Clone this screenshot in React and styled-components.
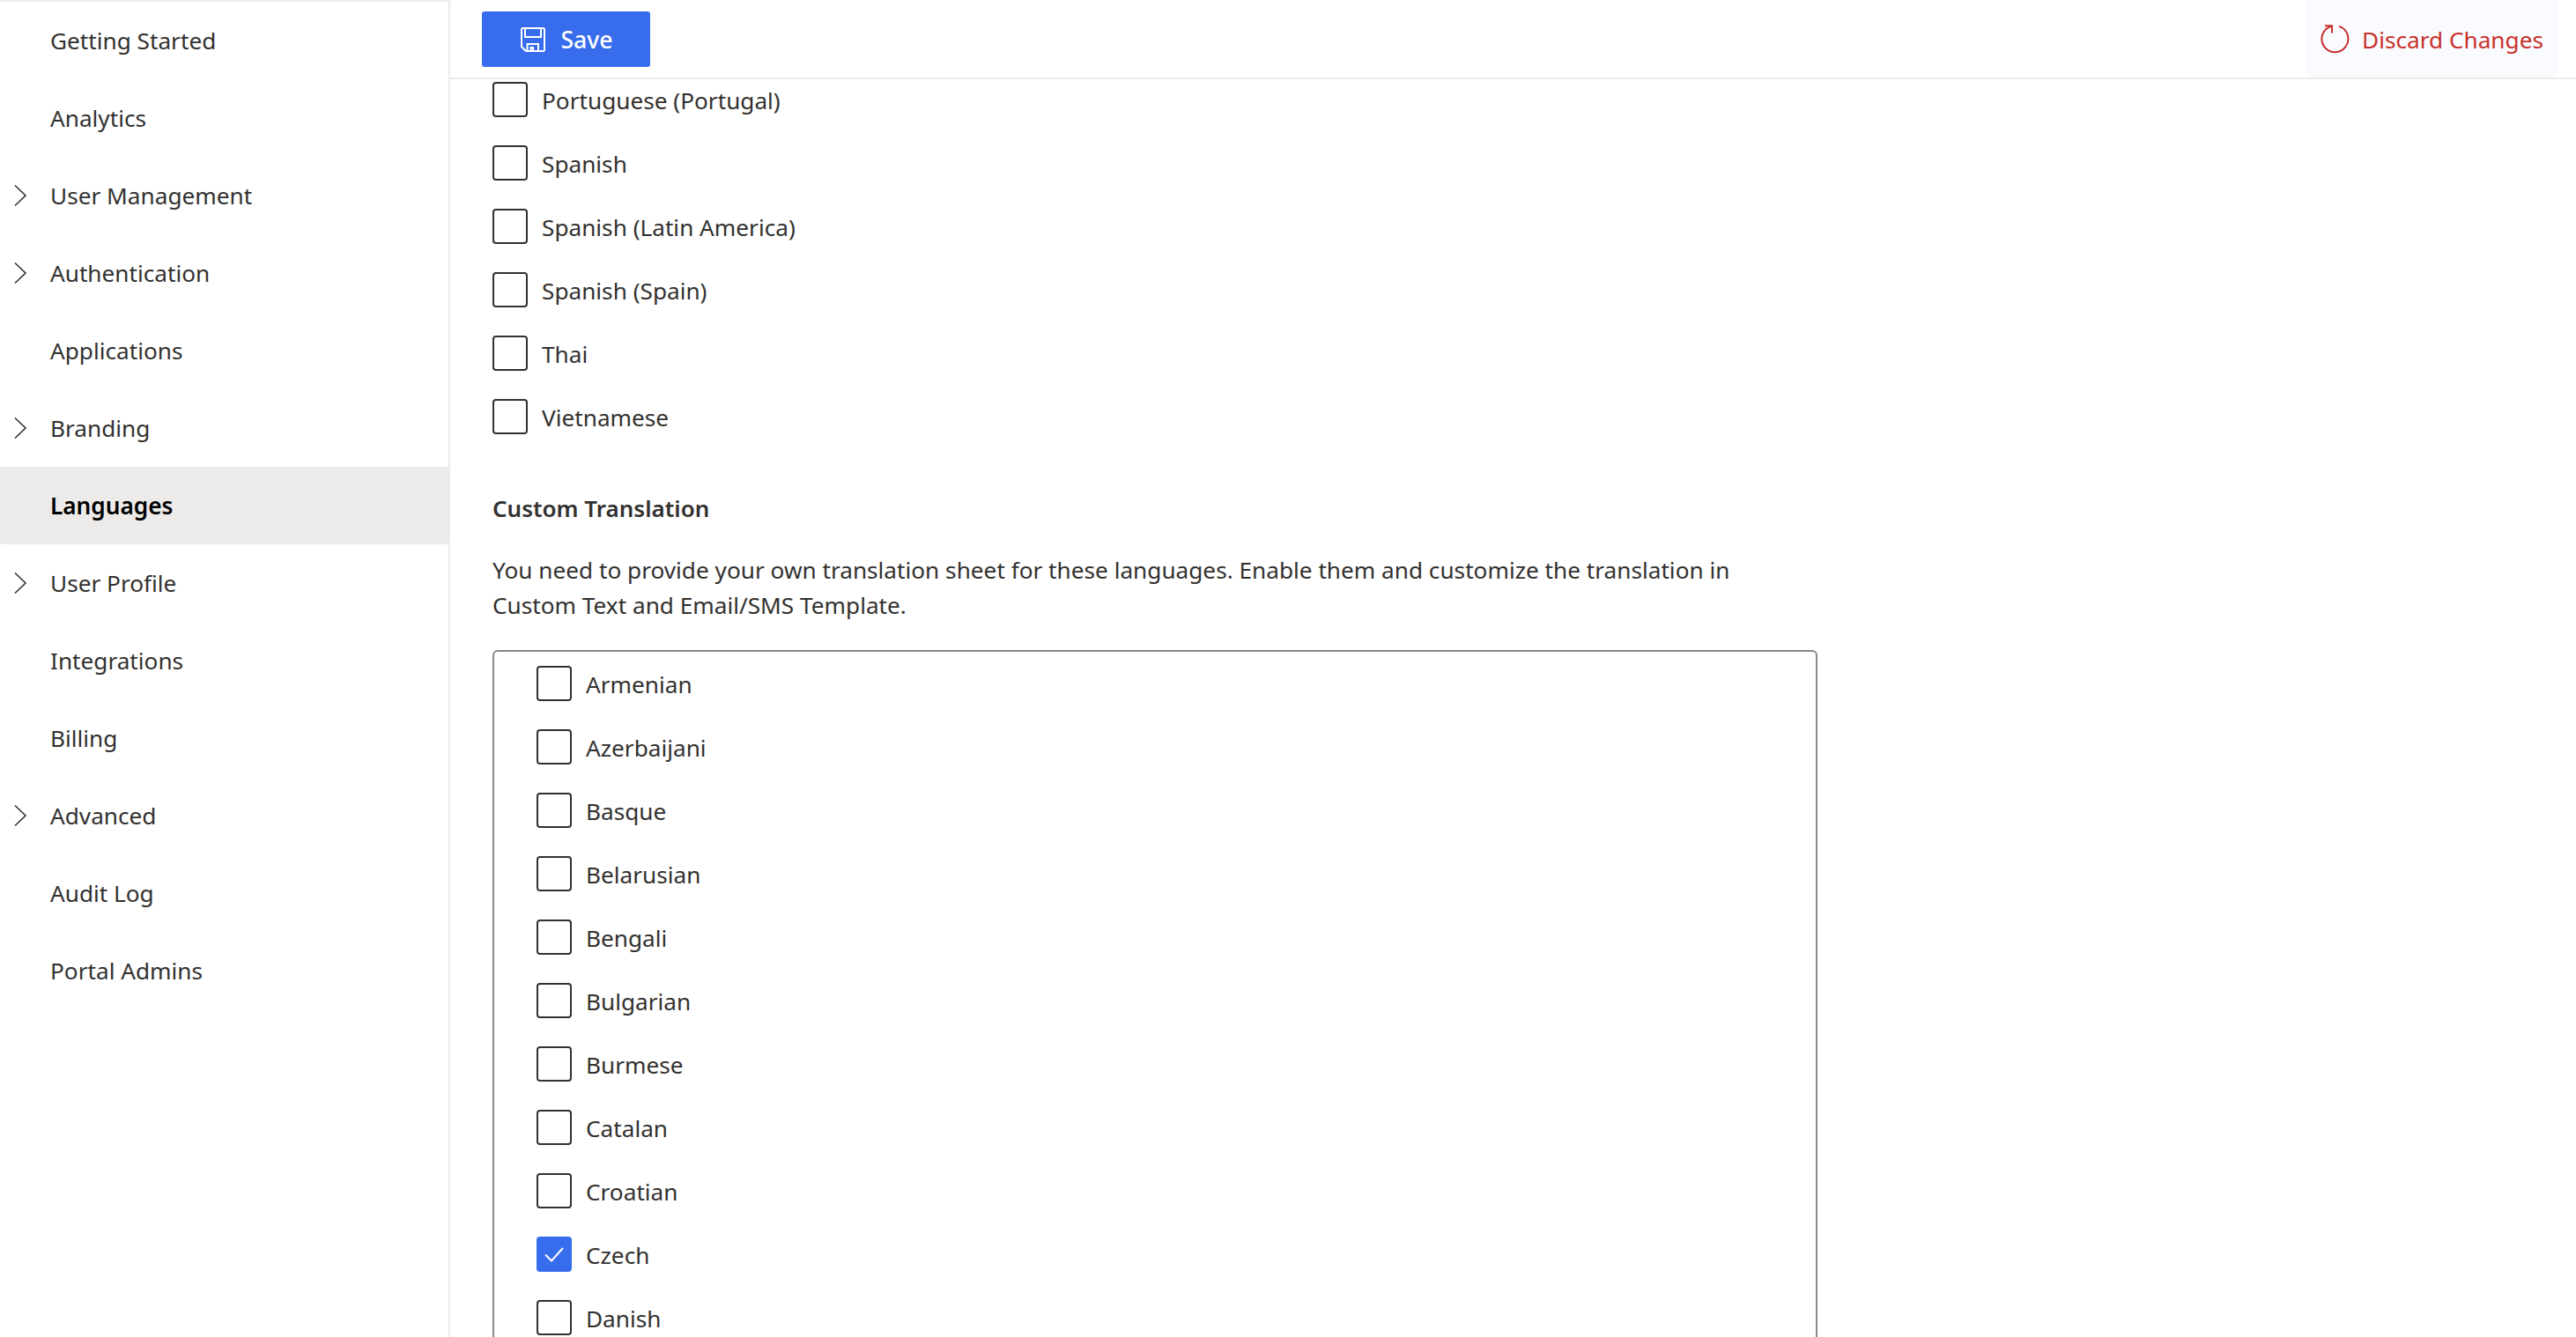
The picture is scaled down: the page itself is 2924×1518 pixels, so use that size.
import React from "react";
import styled, { createGlobalStyle } from "styled-components";

const Global = createGlobalStyle`
  html, body { margin: 0; padding: 0; background: #fff; }
  body { font-family: "Noto Sans", "Open Sans", sans-serif; color: #323130; }
`;

const Page = styled.div`
  display: flex;
  width: 2924px;
  height: 1518px;
  overflow: hidden;
  background: #fff;
`;

const Sidebar = styled.nav`
  flex: 0 0 511px;
  box-sizing: border-box;
  border-top: 2px solid #edebe9;
  border-right: 2px solid #edebe9;
  display: flex;
  flex-direction: column;
`;

const NavItem = styled.div`
  height: 88px;
  flex: 0 0 88px;
  display: flex;
  align-items: center;
  padding-left: 15px;
  gap: 14px;
  font-size: 26.2px;
  border-radius: 3px;
  color: ${(p) => (p.$active ? "#000" : "#323130")};
  font-weight: ${(p) => (p.$active ? 600 : 400)};
  background: ${(p) => (p.$active ? "#edebe9" : "transparent")};
`;

const ChevronSlot = styled.span`
  width: 28px;
  height: 28px;
  display: flex;
  align-items: center;
  flex: none;
`;

const Main = styled.main`
  flex: 1;
  min-width: 0;
  display: flex;
  flex-direction: column;
`;

const Header = styled.header`
  flex: 0 0 90px;
  box-sizing: border-box;
  border-bottom: 2px solid #edebe9;
  display: flex;
  align-items: stretch;
  justify-content: space-between;
  padding: 13px 21px 0 36px;
`;

const SaveButton = styled.button`
  width: 191px;
  height: 63px;
  box-sizing: border-box;
  border: 0;
  border-radius: 3px;
  background: #376ced;
  color: #fff;
  font: 500 26.6px "Noto Sans", sans-serif;
  display: flex;
  align-items: center;
  justify-content: center;
  gap: 17px;
  padding: 0 0 0 2px;
`;

const DiscardButton = styled.button`
  width: 285px;
  margin-top: -13px;
  border: 0;
  background: #fafbff;
  color: #c9302c;
  font: 400 26.2px "Noto Sans", sans-serif;
  display: flex;
  align-items: center;
  justify-content: center;
  gap: 13px;
  padding: 1px 0 0;
`;

const Content = styled.div`
  flex: 1;
  min-height: 0;
  overflow: hidden;
  padding-left: 48px;
`;

const ScrollBody = styled.div`
  margin-top: -13px;
  display: flex;
  flex-direction: column;
`;

const Row = styled.label`
  height: 72px;
  flex: 0 0 72px;
  display: flex;
  align-items: center;
  gap: 16px;
  font-size: 26.2px;
  color: #323130;
`;

const RowLabel = styled.span`
  padding-top: 2px;
`;

const Box = styled.span`
  width: 40px;
  height: 40px;
  flex: none;
  box-sizing: border-box;
  border-radius: 4px;
  border: 2px solid ${(p) => (p.$checked ? "#376ced" : "#323130")};
  background: ${(p) => (p.$checked ? "#376ced" : "#fff")};
  display: flex;
  align-items: center;
  justify-content: center;
`;

const Heading = styled.h3`
  margin: 48px 0 0;
  font-size: 26px;
  line-height: 40px;
  font-weight: 600;
  color: #323130;
`;

const Para = styled.p`
  margin: 30px 0 0;
  width: 1480px;
  font-size: 26.2px;
  line-height: 40px;
  color: #323130;
`;

const ListBox = styled.div`
  margin-top: 31px;
  width: 1504px;
  box-sizing: border-box;
  flex: none;
  border: 2px solid #8a8886;
  border-radius: 6px;
  padding: 0 0 0 48px;
  display: flex;
  flex-direction: column;
`;

const Chevron = () => (
  <svg width="16" height="26" viewBox="0 0 16 26" fill="none">
    <path d="M2 1.5 L14 13 L2 24.5" stroke="#323130" strokeWidth="1.6" />
  </svg>
);

const SaveIcon = () => (
  <svg width="28" height="28" viewBox="0 0 28 28" fill="none" stroke="#fff" strokeWidth="2">
    <path d="M2.500 1 H25.500 A1.500 1.500 0 0 1 27 2.500 V25.500 A1.500 1.500 0 0 1 25.500 27 H6 L1 22 V2.500 A1.500 1.500 0 0 1 2.500 1 Z" />
    <path d="M5 1 V11 H23 V1" />
    <path d="M7.500 27 V19 H20 V27" />
    <path d="M11.500 27 V23 H14 V27" />
  </svg>
);

const DiscardIcon = () => (
  <svg width="34" height="34" viewBox="0 0 34 34" fill="none" stroke="#c9302c" strokeWidth="2">
    <path d="M12.500 1.700 A15 15 0 1 0 21 1.900" />
    <path d="M5 1.200 H13 V9.500" />
  </svg>
);

const Check = () => (
  <svg width="24" height="24" viewBox="0 0 24 24" fill="none">
    <path d="M2 12.500 L9 19.500 L22 5" stroke="#fff" strokeWidth="2" />
  </svg>
);

const nav = [
  ["Getting Started"],
  ["Analytics"],
  ["User Management", true],
  ["Authentication", true],
  ["Applications"],
  ["Branding", true],
  ["Languages", false, true],
  ["User Profile", true],
  ["Integrations"],
  ["Billing"],
  ["Advanced", true],
  ["Audit Log"],
  ["Portal Admins"],
];

const top = ["Portuguese (Portugal)", "Spanish", "Spanish (Latin America)", "Spanish (Spain)", "Thai", "Vietnamese"];
const custom = ["Armenian", "Azerbaijani", "Basque", "Belarusian", "Bengali", "Bulgarian", "Burmese", "Catalan", "Croatian", "Czech", "Danish"];

const LangRow = ({ name, checked }) => (
  <Row>
    <Box $checked={checked}>{checked && <Check />}</Box>
    <RowLabel>{name}</RowLabel>
  </Row>
);

export default function App() {
  return (
    <>
      <Global />
      <Page>
        <Sidebar>
          {nav.map(([label, chev, active]) => (
            <NavItem key={label} $active={active}>
              <ChevronSlot>{chev && <Chevron />}</ChevronSlot>
              {label}
            </NavItem>
          ))}
        </Sidebar>
        <Main>
          <Header>
            <SaveButton><SaveIcon />Save</SaveButton>
            <DiscardButton><DiscardIcon />Discard Changes</DiscardButton>
          </Header>
          <Content>
            <ScrollBody>
              {top.map((n) => <LangRow key={n} name={n} />)}
              <Heading>Custom Translation</Heading>
              <Para>You need to provide your own translation sheet for these languages. Enable them and customize the translation in Custom Text and Email/SMS Template.</Para>
              <ListBox>
                {custom.map((n) => <LangRow key={n} name={n} checked={n === "Czech"} />)}
              </ListBox>
            </ScrollBody>
          </Content>
        </Main>
      </Page>
    </>
  );
}
